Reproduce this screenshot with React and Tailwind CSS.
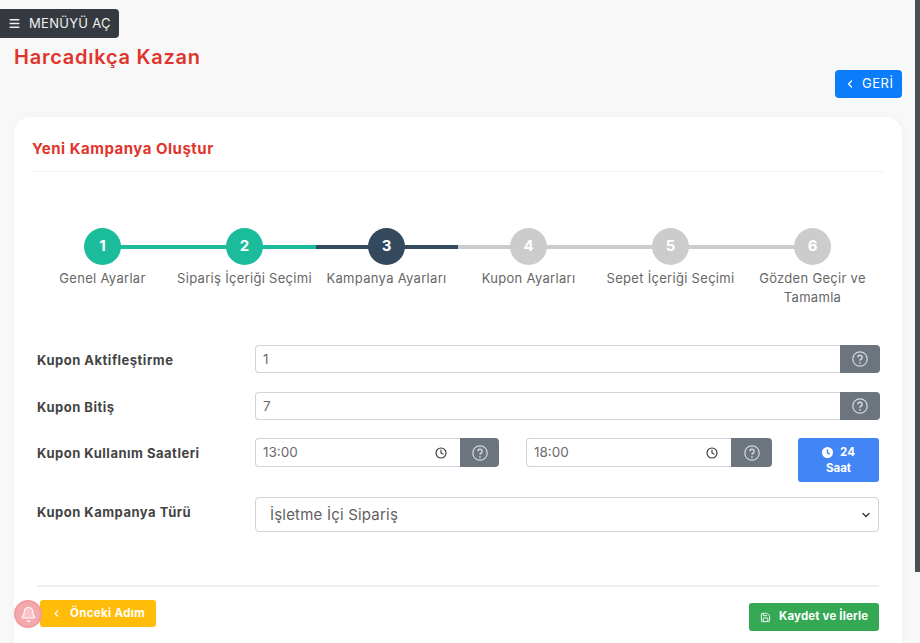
import { Menu, ChevronLeft, Clock, Save, Bell, ChevronDown } from 'lucide-react';

const font = { fontFamily: 'Inter, "Open Sans", sans-serif' };

const steps = [
  { no: 1, label: 'Genel Ayarlar', circle: 'bg-[#1abc9c]', left: 'bg-transparent', right: 'bg-[#1abc9c]' },
  { no: 2, label: 'Sipariş İçeriği Seçimi', circle: 'bg-[#1abc9c]', left: 'bg-[#1abc9c]', right: 'bg-[#1abc9c]' },
  { no: 3, label: 'Kampanya Ayarları', circle: 'bg-[#34495e]', left: 'bg-[#34495e]', right: 'bg-[#34495e]' },
  { no: 4, label: 'Kupon Ayarları', circle: 'bg-[#cccccc]', left: 'bg-[#cccccc]', right: 'bg-[#cccccc]' },
  { no: 5, label: 'Sepet İçeriği Seçimi', circle: 'bg-[#cccccc]', left: 'bg-[#cccccc]', right: 'bg-[#cccccc]' },
  { no: 6, label: 'Gözden Geçir ve Tamamla', circle: 'bg-[#cccccc]', left: 'bg-[#cccccc]', right: 'bg-transparent' },
];

function HelpIcon() {
  return (
    <svg width="16" height="16" viewBox="0 0 16 16" fill="none" stroke="#d5d8dc" strokeWidth="1.2">
      <circle cx="8" cy="8" r="7.2" />
      <path d="M5.9 6.3a2.1 2.1 0 1 1 3.3 1.7c-.8.5-1.2.9-1.2 1.7" strokeWidth="1.5" />
      <circle cx="8" cy="11.8" r=".9" fill="#d5d8dc" stroke="none" />
    </svg>
  );
}

function SolidClock() {
  return (
    <svg width="11" height="11" viewBox="0 0 12 12">
      <circle cx="6" cy="6" r="6" fill="#fff" />
      <path d="M6 2.6V6.3L8.4 7.8" fill="none" stroke="#4285f4" strokeWidth="1.5" />
    </svg>
  );
}

function Addon({ w }) {
  return (
    <div className={`${w} h-full bg-[#6c757d] rounded-r flex items-center justify-center shrink-0`}>
      <HelpIcon />
    </div>
  );
}

function TimeField({ value, addon }) {
  return (
    <div className="flex h-[29px]">
      <div className="w-[205px] bg-white border border-[#ced4da] border-r-0 rounded-l flex items-center justify-between pl-[7px] pr-[13px] text-[13.5px] text-[#6b6b6b]">
        <span>{value}</span>
        <Clock className="w-3 h-3 text-[#333]" strokeWidth={2.2} />
      </div>
      <Addon w={addon} />
    </div>
  );
}

export default function App() {
  return (
    <div style={font} className="relative h-[643px] overflow-hidden bg-[#f8f8f8]">
      <div className="absolute right-0 top-0 w-[5px] h-[572px] bg-[#4b4f56]" />

      <div className="pt-[9px]">
        <button className="w-[119px] h-[29px] bg-[#343a40] rounded-r flex items-center pl-[8px] gap-[8px] text-[13px] text-[#f0f0f0] tracking-[0.3px]">
          <Menu className="w-[13px] h-[13px]" strokeWidth={2.6} />
          MENÜYÜ AÇ
        </button>
      </div>

      <div className="flex justify-between pl-[14px] pr-[18px]">
        <h1 className="mt-[6px] text-[20px] leading-[26px] font-semibold text-[#e0342c] tracking-[0.75px]">Harcadıkça Kazan</h1>
        <button className="mt-[32px] w-[67px] h-[28px] bg-[#0b7dfb] rounded text-white text-[13px] tracking-[0.5px] flex items-center pl-[9px] gap-[6px]">
          <ChevronLeft className="w-3 h-3" strokeWidth={2.5} />
          GERİ
        </button>
      </div>

      <div className="ml-[14px] mr-[18px] mt-[19px] h-[560px] bg-white rounded-t-2xl shadow-[0_0_12px_rgba(0,0,0,0.03)]">
        <div className="mx-[18px] h-[55px] pt-[21px] border-b border-[#f5f5f5]">
          <h2 className="text-[15px] leading-[22px] font-bold text-[#e0342c] tracking-[0.5px]">Yeni Kampanya Oluştur</h2>
        </div>

        <div className="flex pl-[17.5px] pr-[18px] mt-[56px]">
          {steps.map((s) => (
            <div key={s.no} className="relative w-[142px] flex flex-col items-center">
              <div className="absolute left-0 right-1/2 top-[17px] h-[4px]">
                <div className={`h-full ${s.left}`} />
              </div>
              <div className="absolute left-1/2 right-0 top-[17px] h-[4px]">
                <div className={`h-full ${s.right}`} />
              </div>
              <div className={`relative w-[37px] h-[37px] rounded-full ${s.circle} text-white font-bold text-[15px] flex items-center justify-center`}>
                {s.no}
              </div>
              <div className="mt-[4px] w-[136px] text-center text-[13px] leading-[19px] tracking-[0.3px] text-[#666]">{s.label}</div>
            </div>
          ))}
        </div>

        <div className="mx-[23px] mt-[38px] text-[13px]">
          <div className="flex h-[28px] items-center">
            <div className="w-[218px] pt-[3px] font-bold text-[#444] tracking-[0.5px]">Kupon Aktifleştirme</div>
            <div className="flex-1 flex h-full -mr-[1px]">
              <div className="flex-1 bg-white border border-[#ced4da] border-r-0 rounded-l flex items-center pl-[7px] text-[13.5px] text-[#6b6b6b]">1</div>
              <Addon w="w-[40px]" />
            </div>
          </div>
          <div className="flex h-[28px] items-center mt-[19px]">
            <div className="w-[218px] pt-[3px] font-bold text-[#444] tracking-[0.5px]">Kupon Bitiş</div>
            <div className="flex-1 flex h-full -mr-[1px]">
              <div className="flex-1 bg-white border border-[#ced4da] border-r-0 rounded-l flex items-center pl-[7px] text-[13.5px] text-[#6b6b6b]">7</div>
              <Addon w="w-[40px]" />
            </div>
          </div>
          <div className="flex mt-[18px]">
            <div className="w-[218px] pt-[7px] leading-[16px] font-bold text-[#444] tracking-[0.5px]">Kupon Kullanım Saatleri</div>
            <TimeField value="13:00" addon="w-[39px]" />
            <div className="ml-[27px]"><TimeField value="18:00" addon="w-[41px]" /></div>
            <button className="ml-[26px] w-[81px] h-[44px] bg-[#4285f4] rounded-[3px] text-white text-[11.5px] leading-[16px] font-bold flex flex-col items-center justify-center">
              <span className="flex items-center gap-[7px]">
                <SolidClock />
                24
              </span>
              <span>Saat</span>
            </button>
          </div>
          <div className="flex items-center mt-[15px] h-[35px]">
            <div className="w-[218px] pb-[4px] font-bold text-[#444] tracking-[0.5px]">Kupon Kampanya Türü</div>
            <div className="flex-1 h-full bg-white border border-[#ced4da] rounded flex items-center justify-between pl-[14px] pr-[6px] text-[15px] text-[#5f5f5f] tracking-[0.2px]">
              <span className="pt-[1px]">İşletme İçi Sipariş</span>
              <ChevronDown className="w-3 h-3 text-[#444]" strokeWidth={3} />
            </div>
          </div>
          <div className="mt-[53px] h-[2px] bg-[#eeeeee]" />
          <div className="flex justify-between items-start mt-[13px]">
            <button className="ml-[3px] w-[116px] h-[27px] bg-[#ffbc08] rounded-[3px] text-white text-[11.5px] font-bold tracking-[0.35px] flex items-center pl-[11px] gap-[8px]">
              <ChevronLeft className="w-[11px] h-[11px]" strokeWidth={2.5} />
              Önceki Adım
            </button>
            <button className="mt-[3px] w-[130px] h-[28px] bg-[#34a853] rounded-[3px] text-white text-[11.5px] font-bold tracking-[0.15px] flex items-center pl-[11px] gap-[8px]">
              <Save className="w-[11px] h-[11px]" strokeWidth={2} />
              Kaydet ve İlerle
            </button>
          </div>
        </div>
      </div>

      <div className="absolute left-[14px] top-[600px] w-[28px] h-[28px] rounded-full bg-[#f4a9ad] border-2 border-[#f19ca1] flex items-center justify-center">
        <Bell className="w-[17px] h-[17px] text-white fill-[#f8c4c7]" strokeWidth={1.5} />
      </div>
    </div>
  );
}
